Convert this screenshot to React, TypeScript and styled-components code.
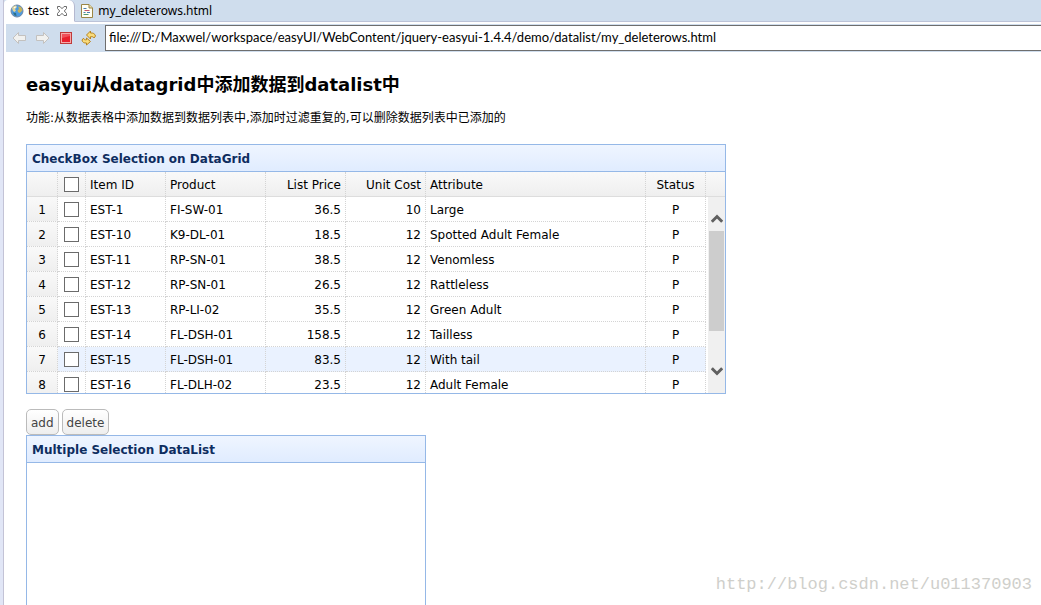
import React from 'react';
import styled, { createGlobalStyle, css } from 'styled-components';

const GlobalStyle = createGlobalStyle`
  *, *::before, *::after { box-sizing: border-box; }
  body {
    margin: 0;
    background: #fff;
    color: #000;
    font-family: "DejaVu Sans", "Noto Sans CJK SC", sans-serif;
    font-size: 12px;
  }
`;

const Shell = styled.div`
  position: relative;
  display: flex;
  height: 100vh;
  overflow: hidden;
`;

const Rail = styled.div`
  flex: none;
  width: 4px;
  background: #e1e6f6;
  border-right: 1px solid #c3c3d6;
`;

const Main = styled.div`
  flex: 1;
  min-width: 0;
  display: flex;
  flex-direction: column;
`;

const TabBar = styled.div`
  flex: none;
  display: flex;
  height: 22px;
  background: #cfdded;
`;

const Tab = styled.div<{ $active?: boolean }>`
  display: flex;
  align-items: center;
  gap: 4px;
  padding: 0 6px;
  font-family: "Noto Sans", sans-serif;
  font-size: 12px;
  line-height: 20px;
  border-bottom: 1px solid #bcc3d8;
  ${(p) =>
    p.$active
      ? css`
          background: #fff;
          border-bottom-color: #fff;
          border-right: 1px solid #b4b8cf;
          border-radius: 4px 6px 0 0;
        `
      : css`
          flex: 1;
          gap: 5px;
        `}
`;

const TabClose = styled.button`
  display: flex;
  margin: 0 0 0 3px;
  padding: 0;
  border: 0;
  background: none;
`;

const Toolbar = styled.div`
  flex: none;
  display: flex;
  align-items: center;
  height: 28px;
  margin: 2px 0 1px 2px;
  padding-left: 2px;
  background: #cfdded;
`;

const ToolButton = styled.button`
  flex: none;
  display: flex;
  justify-content: center;
  width: 23px;
  padding: 0;
  border: 0;
  background: none;
`;

const Address = styled.input`
  flex: 1;
  min-width: 0;
  height: 26px;
  margin-left: 5px;
  padding: 0 3px 2px;
  border: 1px solid #6e6e6e;
  border-right: 0;
  border-radius: 0;
  background: #fff;
  color: #000;
  font-family: Lato, "Noto Sans", sans-serif;
  font-size: 13px;
  outline: 0;
`;

const Content = styled.main`
  flex: 1;
  min-height: 0;
  overflow: hidden;
  padding: 20px 22px;
`;

const Heading = styled.h2`
  margin: 0 0 12px;
  font-size: 18px;
  line-height: 24px;
`;

const Intro = styled.p`
  margin: 0 0 17px;
  font-size: 12px;
  line-height: 18px;
`;

const Panel = styled.section<{ $max: number; $height: number }>`
  display: flex;
  flex-direction: column;
  max-width: ${(p) => p.$max}px;
  height: ${(p) => p.$height}px;
  border: 1px solid #95b8e7;
  background: #fff;
`;

const PanelTitle = styled.h3`
  flex: none;
  margin: 0;
  padding: 6px 5px 4px;
  height: 27px;
  border-bottom: 1px solid #95b8e7;
  background: linear-gradient(to bottom, #eff5ff, #e0ecff);
  color: #0e2d5f;
  font-size: 12px;
  line-height: 16px;
`;

const HeadRow = styled.div`
  flex: none;
  display: flex;
  background: linear-gradient(to bottom, #f9f9f9, #efefef);
  border-bottom: 1px solid #ddd;
`;

const BodyRow = styled.div`
  flex: 1;
  min-height: 0;
  display: flex;
  overflow: hidden;
`;

const Viewport = styled.div`
  flex: 1;
  min-width: 0;
  overflow: hidden;
`;

const Table = styled.table`
  width: 679px;
  table-layout: fixed;
  border-collapse: separate;
  border-spacing: 0;
`;

type Align = 'left' | 'right' | 'center';

const cell = css<{ $align?: Align; $check?: boolean }>`
  padding: ${(p) => (p.$check ? '0 4px' : '2px 4px 0')};
  border-right: 1px dotted #d4d4d4;
  font-size: 12px;
  font-weight: normal;
  line-height: 16px;
  white-space: nowrap;
  text-align: ${(p) => p.$align ?? 'left'};
`;

const HeadCell = styled.th<{ $align?: Align; $check?: boolean }>`
  ${cell}
  height: 24px;
`;

const Cell = styled.td<{ $align?: Align; $check?: boolean }>`
  ${cell}
  height: 25px;
  border-bottom: 1px dotted #d4d4d4;
`;

const NumberCell = styled(Cell)`
  background: linear-gradient(to bottom, #f9f9f9, #efefef);
`;

const Row = styled.tr<{ $hover?: boolean }>`
  background: ${(p) => (p.$hover ? '#eaf2ff' : '#fff')};
`;

const Check = styled.input`
  appearance: none;
  display: block;
  width: 15px;
  height: 15px;
  margin: 0 auto;
  border: 1px solid #6b6b6b;
  background: #fff;
`;

const ScrollBar = styled.div`
  flex: none;
  display: flex;
  flex-direction: column;
  align-items: center;
  width: 17px;
  padding: 17px 1px;
  background: #f0f0f0;
`;

const Thumb = styled.div`
  width: 100%;
  height: 100px;
  margin: 8px 0 auto;
  background: #cdcdcd;
`;

const Actions = styled.div`
  display: flex;
  gap: 3px;
  margin-top: 15px;
`;

const LinkButton = styled.button`
  height: 26px;
  padding: 1px 4px 0;
  border: 1px solid #bbb;
  border-radius: 5px;
  background: linear-gradient(to bottom, #fff, #eee);
  color: #444;
  font-family: inherit;
  font-size: 12px;
  line-height: 24px;
`;

const Watermark = styled.div`
  position: absolute;
  right: 9px;
  bottom: 9px;
  color: #cfcfcb;
  font-family: "Liberation Mono", monospace;
  font-size: 17px;
  line-height: 22px;
`;

const GlobeIcon = () => (
  <svg width="14" height="14" viewBox="0 0 14 14" aria-hidden="true">
    <circle cx="7" cy="7" r="6" fill="#4d9be0" stroke="#6d86a6" />
    <path d="M2 4C3 2 5 1.200 6 1.500L7 3 5 5 6 6.500 4.500 8 3 7Z" fill="#e2d59a" />
    <path d="M8 2.500 11 3 12.500 6 11 8 9.500 9 8 8 7.500 6.500 9 5Z" fill="#c9b45c" />
    <path d="M3 8.500 6 9 6.500 12 4.500 11.500Z" fill="#2f6f86" />
    <path d="M3.500 3.500 6 2.500 5 4.500Z" fill="#fff" />
  </svg>
);

const CloseIcon = () => (
  <svg width="12" height="12" viewBox="0 0 12 12" aria-hidden="true">
    <path
      d="M1.500 1.500h2.500l2 2.200 2-2.200h2.500v2L8.300 6l2.200 2.500v2H8L6 8.300 4 10.500H1.500v-2L3.700 6 1.500 3.500z"
      fill="#fff"
      stroke="#6d6d6d"
    />
  </svg>
);

const PageIcon = () => (
  <svg width="12" height="14" viewBox="0 0 12 14" aria-hidden="true">
    <path d="M.5.500h7.500l3.500 3.500v9.500H.5z" fill="#fffef4" stroke="#9b8545" />
    <path d="M8 .5v3.500h3.500" fill="#eadfae" stroke="#9b8545" />
    <path d="M2.500 4.500h3M2.500 8.500h2M6 8.500h3" stroke="#4a7fb5" />
    <path d="M3.500 6.500h5" stroke="#c2576c" />
    <path d="M2.500 10.500h5" stroke="#4f9a74" />
  </svg>
);

const ArrowIcon = ({ flip }: { flip?: boolean }) => (
  <svg width="15" height="14" viewBox="0 0 15 14" aria-hidden="true">
    <path
      transform={flip ? 'matrix(-1 0 0 1 15 0)' : undefined}
      d="M1 7 6.500 1.500V4.500H13.500V9.500H6.500V12.500Z"
      fill="#f1f1ef"
      stroke="#c3c1bf"
      strokeLinejoin="round"
    />
  </svg>
);

const StopIcon = () => (
  <svg width="12" height="12" viewBox="0 0 12 12" aria-hidden="true">
    <rect x=".5" y=".5" width="11" height="11" fill="#f6a9a9" stroke="#c03a3a" />
    <rect x="2" y="2" width="8" height="8" fill="#e8202c" />
    <path d="M2 6V2h8v2z" fill="#f0505a" />
  </svg>
);

const RefreshIcon = () => (
  <svg width="16" height="16" viewBox="0 0 16 16" aria-hidden="true">
    <g fill="#f9dc7c" stroke="#b88420" strokeLinejoin="round">
      <path d="M5.500 5 9.500 1v2c2.500-.3 4.500.7 5 3L13 8c-.7-1.200-1.500-1.500-3.500-1.300V9z" />
      <path d="M9.500 11.500 5.500 15v-2C3 13.200 1.300 12.300 1 10l1.500-1.800C3 9.600 3.700 10 5.500 9.800V8z" />
    </g>
  </svg>
);

const Chevron = ({ down }: { down?: boolean }) => (
  <svg width="12" height="9" viewBox="0 0 12 9" aria-hidden="true">
    <path
      d={down ? 'M.8 1.300 6 6.500 11.200 1.300' : 'M.8 7.700 6 2.500 11.200 7.700'}
      fill="none"
      stroke="#606060"
      strokeWidth="3"
    />
  </svg>
);

const columns: { title: string; width: number; align: Align }[] = [
  { title: 'Item ID', width: 80, align: 'left' },
  { title: 'Product', width: 100, align: 'left' },
  { title: 'List Price', width: 80, align: 'right' },
  { title: 'Unit Cost', width: 80, align: 'right' },
  { title: 'Attribute', width: 220, align: 'left' },
  { title: 'Status', width: 60, align: 'center' },
];

const rows: string[][] = [
  ['EST-1', 'FI-SW-01', '36.5', '10', 'Large', 'P'],
  ['EST-10', 'K9-DL-01', '18.5', '12', 'Spotted Adult Female', 'P'],
  ['EST-11', 'RP-SN-01', '38.5', '12', 'Venomless', 'P'],
  ['EST-12', 'RP-SN-01', '26.5', '12', 'Rattleless', 'P'],
  ['EST-13', 'RP-LI-02', '35.5', '12', 'Green Adult', 'P'],
  ['EST-14', 'FL-DSH-01', '158.5', '12', 'Tailless', 'P'],
  ['EST-15', 'FL-DSH-01', '83.5', '12', 'With tail', 'P'],
  ['EST-16', 'FL-DLH-02', '23.5', '12', 'Adult Female', 'P'],
];

const Columns = () => (
  <colgroup>
    <col style={{ width: 31 }} />
    <col style={{ width: 28 }} />
    {columns.map((c) => (
      <col key={c.title} style={{ width: c.width }} />
    ))}
  </colgroup>
);

export default function App() {
  return (
    <Shell>
      <GlobalStyle />
      <Rail />
      <Main>
        <TabBar>
          <Tab $active>
            <GlobeIcon />
            test
            <TabClose aria-label="Close tab">
              <CloseIcon />
            </TabClose>
          </Tab>
          <Tab>
            <PageIcon />
            my_deleterows.html
          </Tab>
        </TabBar>
        <Toolbar>
          <ToolButton aria-label="Back"><ArrowIcon /></ToolButton>
          <ToolButton aria-label="Forward"><ArrowIcon flip /></ToolButton>
          <ToolButton aria-label="Stop"><StopIcon /></ToolButton>
          <ToolButton aria-label="Refresh"><RefreshIcon /></ToolButton>
          <Address
            aria-label="Address"
            defaultValue="file:///D:/Maxwel/workspace/easyUI/WebContent/jquery-easyui-1.4.4/demo/datalist/my_deleterows.html"
          />
        </Toolbar>
        <Content>
          <Heading>easyui从datagrid中添加数据到datalist中</Heading>
          <Intro>功能:从数据表格中添加数据到数据列表中,添加时过滤重复的,可以删除数据列表中已添加的</Intro>
          <Panel $max={700} $height={250}>
            <PanelTitle>CheckBox Selection on DataGrid</PanelTitle>
            <HeadRow>
              <Table>
                <Columns />
                <thead>
                  <tr>
                    <HeadCell />
                    <HeadCell $check>
                      <Check type="checkbox" aria-label="Select all rows" />
                    </HeadCell>
                    {columns.map((c) => (
                      <HeadCell key={c.title} $align={c.align}>{c.title}</HeadCell>
                    ))}
                  </tr>
                </thead>
              </Table>
            </HeadRow>
            <BodyRow>
              <Viewport>
                <Table>
                  <Columns />
                  <tbody>
                    {rows.map((row, i) => (
                      <Row key={row[0]} $hover={i === 6}>
                        <NumberCell $align="center">{i + 1}</NumberCell>
                        <Cell $check>
                          <Check type="checkbox" aria-label={`Select ${row[0]}`} />
                        </Cell>
                        {row.map((value, j) => (
                          <Cell key={j} $align={columns[j].align}>{value}</Cell>
                        ))}
                      </Row>
                    ))}
                  </tbody>
                </Table>
              </Viewport>
              <ScrollBar>
                <Chevron />
                <Thumb />
                <Chevron down />
              </ScrollBar>
            </BodyRow>
          </Panel>
          <Actions>
            <LinkButton>add</LinkButton>
            <LinkButton>delete</LinkButton>
          </Actions>
          <Panel $max={400} $height={250}>
            <PanelTitle>Multiple Selection DataList</PanelTitle>
          </Panel>
        </Content>
      </Main>
      <Watermark>http://blog.csdn.net/u011370903</Watermark>
    </Shell>
  );
}
